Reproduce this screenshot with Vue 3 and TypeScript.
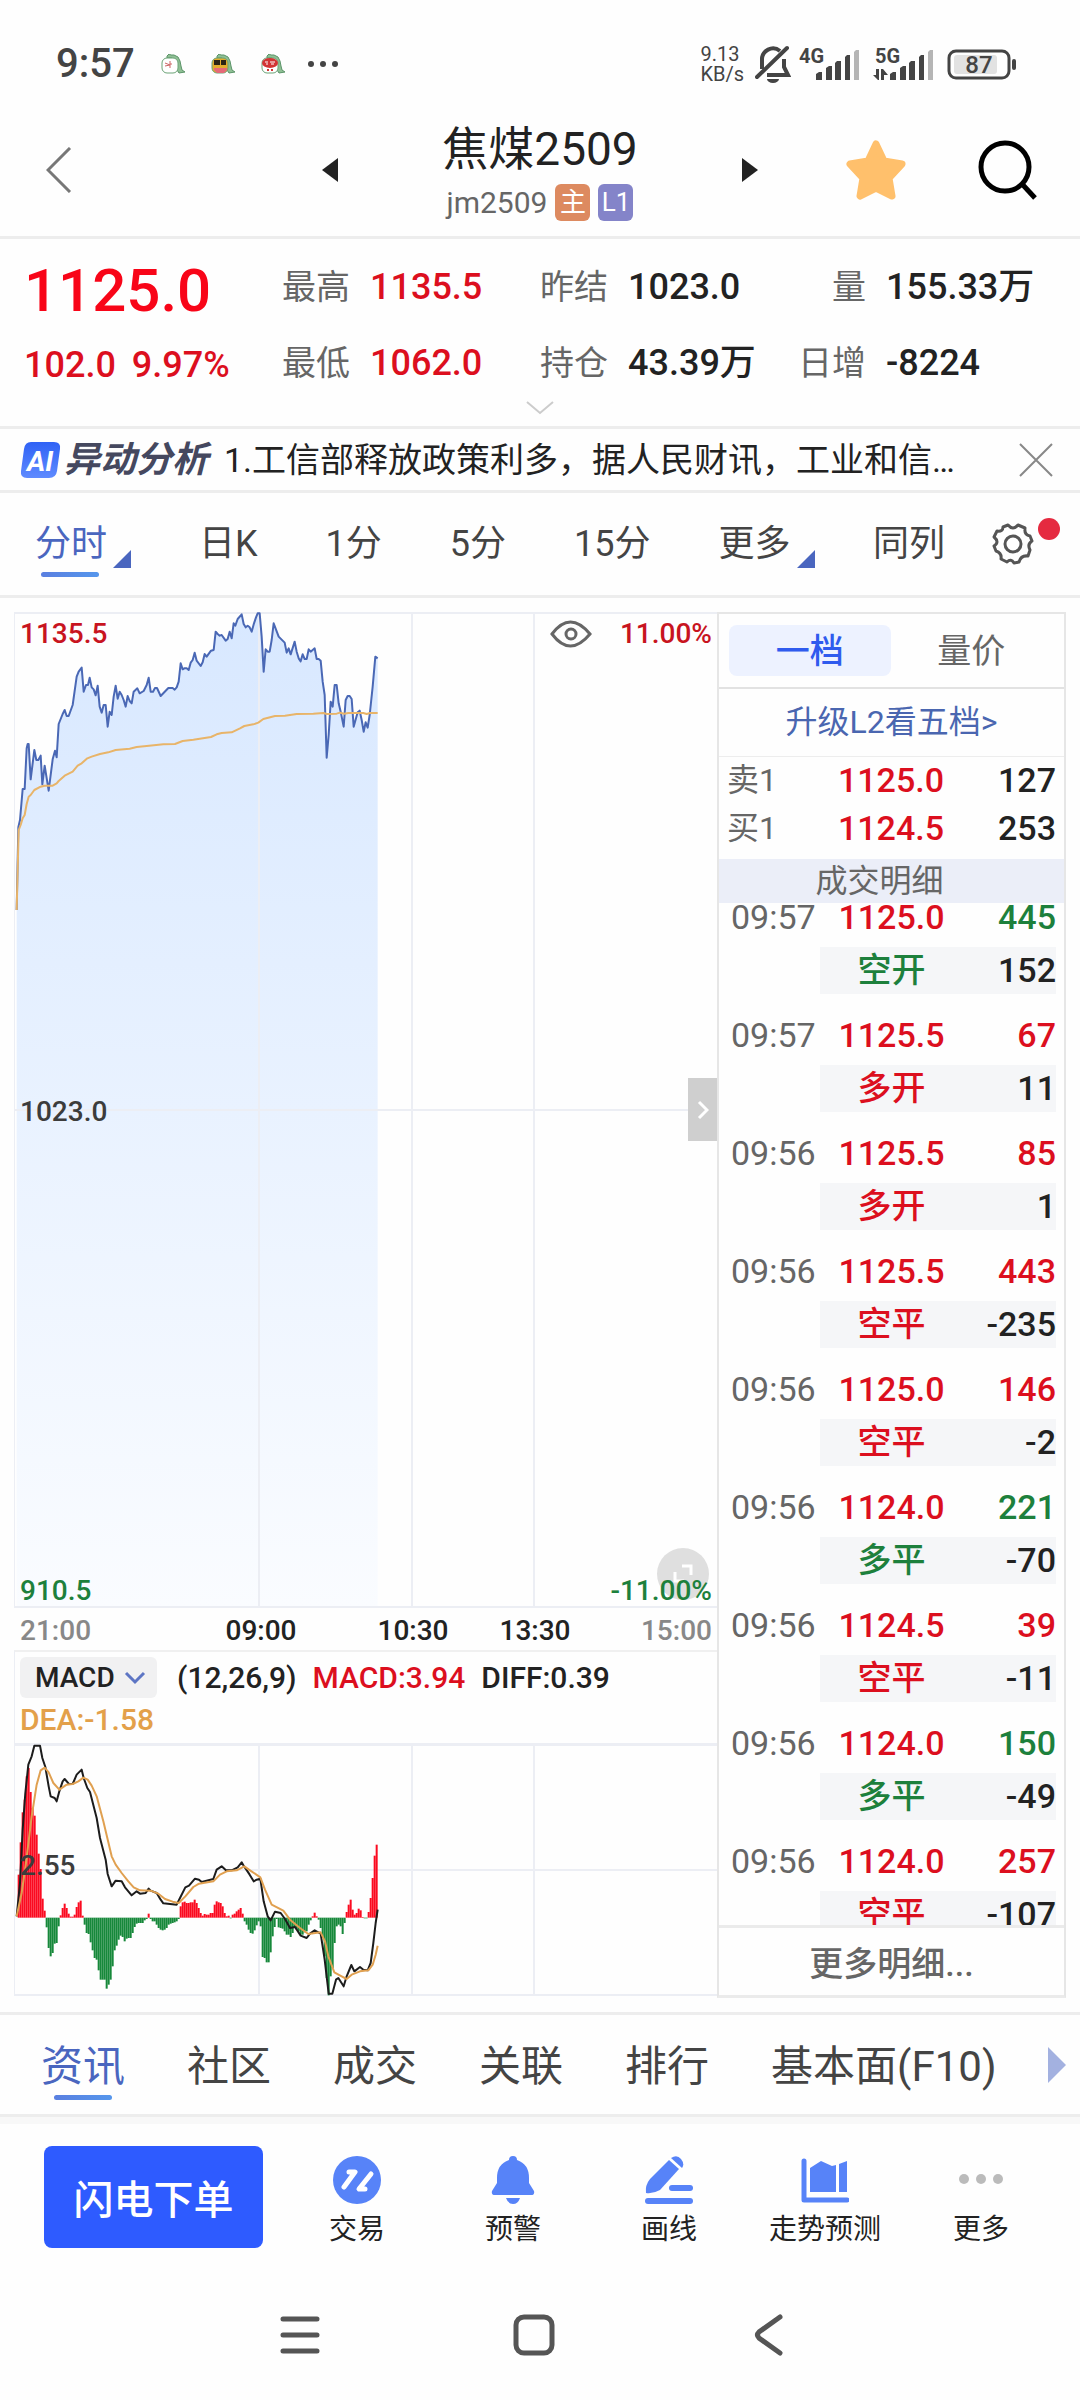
<script setup lang="ts">
import { computed, ref } from 'vue'

type Tone = 'up' | 'down'
interface Quote { label: string; value: string; tone?: Tone }
interface Trade { time: string; price: string; volume: string; tone: Tone; kind: string; kindTone: Tone; change: string }

const quoteRows: Quote[][] = [
  [
    { label: '最高', value: '1135.5', tone: 'up' },
    { label: '昨结', value: '1023.0' },
    { label: '量', value: '155.33万' },
  ],
  [
    { label: '最低', value: '1062.0', tone: 'up' },
    { label: '持仓', value: '43.39万' },
    { label: '日增', value: '-8224' },
  ],
]
const quotes = computed(() => quoteRows.flat())

const periods = [
  { name: '分时', menu: true },
  { name: '日K', menu: false },
  { name: '1分', menu: false },
  { name: '5分', menu: false },
  { name: '15分', menu: false },
  { name: '更多', menu: true },
]
const period = ref('分时')

const orders = [
  { side: '卖1', price: '1125.0', volume: '127' },
  { side: '买1', price: '1124.5', volume: '253' },
]

const trades: Trade[] = [
  { time: '09:57', price: '1125.0', volume: '445', tone: 'down', kind: '空开', kindTone: 'down', change: '152' },
  { time: '09:57', price: '1125.5', volume: '67', tone: 'up', kind: '多开', kindTone: 'up', change: '11' },
  { time: '09:56', price: '1125.5', volume: '85', tone: 'up', kind: '多开', kindTone: 'up', change: '1' },
  { time: '09:56', price: '1125.5', volume: '443', tone: 'up', kind: '空平', kindTone: 'up', change: '-235' },
  { time: '09:56', price: '1125.0', volume: '146', tone: 'up', kind: '空平', kindTone: 'up', change: '-2' },
  { time: '09:56', price: '1124.0', volume: '221', tone: 'down', kind: '多平', kindTone: 'down', change: '-70' },
  { time: '09:56', price: '1124.5', volume: '39', tone: 'up', kind: '空平', kindTone: 'up', change: '-11' },
  { time: '09:56', price: '1124.0', volume: '150', tone: 'down', kind: '多平', kindTone: 'down', change: '-49' },
  { time: '09:56', price: '1124.0', volume: '257', tone: 'up', kind: '空平', kindTone: 'up', change: '-107' },
]

const sections = ['资讯', '社区', '成交', '关联', '排行', '基本面(F10)']
const section = ref('资讯')
const indicator = ref('MACD')

// Series in chart units, three to a pixel of the panel's natural width.
const priceLine =
  '50,930 55,682 60,660 68,567 74,567 80,445 83,432 86,432 92,538 103,450 109,480 115,480 122,467 127,553 134,497 146,572 158,478 165,452 170,472 176,372 188,342 194,330 200,348 206,348 218,315 230,230 236,215 245,203 251,275 258,255 264,255 269,233 275,262 281,268 287,286 293,257 299,320 305,338 311,315 317,315 323,380 329,335 335,345 341,290 347,257 353,296 359,275 365,285 371,300 377,320 383,288 389,303 395,310 401,275 412,265 419,280 431,273 440,255 446,233 452,275 459,275 465,264 471,264 482,288 505,264 518,264 524,269 530,262 536,245 542,190 548,208 553,205 560,205 566,210 572,188 578,180 584,158 590,182 602,198 608,187 614,162 620,170 633,152 641,150 647,95 653,102 659,107 665,105 677,122 683,117 689,95 695,115 701,70 706,77 713,57 725,43 731,72 737,82 743,77 749,82 755,95 762,70 768,52 773,40 779,40 785,110 791,215 797,148 803,155 809,155 815,120 821,70 836,110 854,128 860,158 866,145 872,163 884,125 890,155 896,175 902,184 908,163 914,177 920,177 926,148 932,155 944,145 950,177 956,177 962,182 968,245 974,285 980,473 986,405 992,305 998,320 1004,255 1010,255 1016,310 1022,335 1031,380 1037,300 1043,288 1049,288 1055,297 1061,380 1073,337 1079,332 1085,360 1091,395 1097,367 1103,383 1109,345 1118,260 1126,170 1133,175'
const averageLine =
  '50,930 56,690 62,675 68,655 74,645 80,612 86,590 92,585 103,570 122,560 134,557 158,557 170,550 176,543 194,527 218,515 233,497 245,490 262,475 275,470 300,462 325,457 347,450 389,446 410,441 440,438 490,433 525,432 548,423 580,419 633,411 650,403 665,399 695,397 720,385 733,378 760,373 775,368 790,357 825,348 855,347 890,342 940,341 970,339 980,342 1010,341 1020,338 1033,341 1045,339 1090,339 1100,342 1110,339 1133,339'
const priceArea = `50,3021 ${priceLine} 1133,3021`

const diffLine =
  '50,1160 60,1060 68,900 76,790 85,705 95,680 103,648 120,648 127,685 136,712 146,770 152,800 164,805 170,815 178,785 188,755 194,748 206,762 218,763 230,735 245,720 251,745 262,775 270,787 290,865 300,925 317,990 323,1033 335,1070 347,1053 365,1055 375,1073 395,1097 410,1085 420,1092 437,1090 446,1077 452,1083 470,1090 482,1110 490,1121 530,1125 540,1105 556,1073 567,1068 585,1047 597,1050 605,1057 640,1048 650,1020 665,1010 677,1021 695,1022 713,1013 725,998 731,1008 749,1035 761,1055 770,1050 781,1047 791,1115 803,1160 812,1172 825,1146 842,1150 855,1168 870,1195 885,1192 902,1218 920,1225 930,1212 944,1202 962,1212 974,1290 986,1392 997,1392 1008,1350 1015,1345 1031,1370 1040,1340 1054,1306 1063,1325 1080,1312 1090,1320 1103,1322 1112,1300 1120,1240 1127,1180 1133,1140'
const deaLine =
  '50,1160 65,1090 78,1000 95,860 110,765 122,722 134,714 146,728 160,760 178,780 200,765 218,763 235,755 250,744 263,750 275,768 290,800 310,875 335,980 347,1005 365,1030 385,1055 401,1073 420,1082 452,1083 475,1092 495,1108 518,1116 536,1120 556,1100 580,1072 597,1062 640,1055 660,1035 680,1025 710,1022 733,1010 750,1022 781,1043 795,1080 815,1125 850,1143 870,1170 900,1195 925,1213 962,1208 975,1235 985,1280 1003,1328 1025,1340 1040,1348 1055,1335 1080,1325 1105,1322 1118,1305 1127,1275 1133,1248'

const BASE = 1164
const barEnds = [
  1035, 938, 848, 810, 740, 715, 787, 835, 858, 915, 972, 1018, 1107, 1143, 1193, 1255, 1280, 1270, 1242, 1240,
  1190, 1157, 1135, 1122, 1135, 1152, 1161, 1161, 1155, 1132, 1118, 1113, 1158, 1185, 1210, 1213, 1238, 1262, 1285, 1290,
  1322, 1350, 1350, 1350, 1377, 1365, 1350, 1310, 1262, 1248, 1230, 1218, 1222, 1235, 1227, 1225, 1225, 1210, 1192, 1182,
  1180, 1180, 1180, 1172, 1168, 1152, 1168, 1175, 1175, 1185, 1195, 1200, 1202, 1200, 1195, 1185, 1182, 1180, 1178, 1175,
  1168, 1130, 1118, 1116, 1120, 1120, 1118, 1118, 1110, 1120, 1135, 1150, 1158, 1153, 1155, 1155, 1150, 1150, 1125, 1115,
  1118, 1120, 1130, 1150, 1160, 1158, 1166, 1155, 1152, 1145, 1140, 1135, 1152, 1175, 1185, 1200, 1210, 1212, 1202, 1187,
  1175, 1190, 1282, 1285, 1298, 1298, 1268, 1220, 1192, 1168, 1193, 1195, 1197, 1205, 1215, 1215, 1222, 1210, 1195, 1200,
  1205, 1215, 1215, 1208, 1205, 1185, 1172, 1160, 1149, 1160, 1170, 1195, 1225, 1280, 1345, 1397, 1340, 1315, 1240, 1190,
  1185, 1190, 1213, 1180, 1147, 1125, 1110, 1140, 1155, 1150, 1137, 1142, 1162, 1166, 1166, 1147, 1105, 1045, 978, 945,
]
const bars = barEnds.map((end, i) => ({
  x: 53 + i * 6,
  y: Math.min(end, BASE),
  height: Math.abs(end - BASE),
  tone: end < BASE ? 'bar-up' : 'bar-down',
}))
</script>

<template>
  <div class="page">
    <div class="status">
      <div class="status-left">
        <span class="clock">9:57</span>
        <svg v-for="n in 3" :key="n" class="dino" viewBox="0 0 24 20" aria-hidden="true">
          <path d="M6 2 8 0l2 1 3 0 4 2 2 4 1 5 1 4 3 2-6 1-2-3-1-8-4-4-5 0z" fill="#8fbf94" stroke="#5b9468" />
          <rect x="1" y="4" width="16" height="15" rx="5" :fill="n === 1 ? '#fff' : n === 2 ? '#e3ac2c' : '#fff'" stroke="#6aa376" />
          <path v-if="n === 1" d="M4 9l5 2-5 1M9 7v7M9 10h2" fill="none" stroke="#c66" />
          <template v-if="n === 2">
            <path d="M3 6h6v5H3zM10 6h5v5h-5z" fill="#2b2414" />
            <path d="M3 14h13v2l-3 3H6l-3-3z" fill="#e56a78" />
          </template>
          <template v-if="n === 3">
            <ellipse cx="9" cy="9" rx="8" ry="5" fill="#d23434" />
            <path d="M4 8h3M9 8h5M5 10h2M10 10h3" stroke="#fff" />
            <path d="M6 16h2M10 16h2" stroke="#d23434" stroke-width="2" />
          </template>
        </svg>
        <svg class="dots" viewBox="0 0 32 8" aria-hidden="true">
          <g fill="#444"><circle cx="4" cy="4" r="3" /><circle cx="16" cy="4" r="3" /><circle cx="28" cy="4" r="3" /></g>
        </svg>
      </div>
      <div class="status-right">
        <div class="speed"><span>9.13</span><span>KB/s</span></div>
        <svg class="mute" viewBox="0 0 36 38" aria-hidden="true">
          <path d="M7 24V15a11 11 0 0 1 18-9M29 14v8l4 8H12" fill="none" stroke="#444" stroke-width="4" />
          <path d="M2 32 32 3" stroke="#444" stroke-width="4" stroke-linecap="round" />
          <path d="M12 34h12a6 4 0 0 1-12 0z" fill="#444" />
        </svg>
        <svg class="signal" viewBox="0 -6 62 48" aria-hidden="true">
          <text x="0" y="17" class="net">4G</text>
          <g fill="#444">
            <path d="M17 28l3-2h3v8h-6zM27 22l3-2h3v14h-6zM36 17l2-2h4v19h-6zM46 11l2-2h3v25h-5z" />
            <path d="M55 6l2-2h3v30h-5z" fill="#b5b5b5" />
          </g>
        </svg>
        <svg class="signal" viewBox="0 -6 62 48" aria-hidden="true">
          <text x="2" y="17" class="net">5G</text>
          <g fill="#444">
            <path d="M0 29h3v-6h3v11H5zM8 34V23h2l5 6h-4v5z" />
            <path d="M17 28l3-2h3v8h-6zM27 22l3-2h3v14h-6zM36 17l2-2h4v19h-6zM46 11l2-2h3v25h-5z" />
            <path d="M55 6l2-2h3v30h-5z" fill="#b5b5b5" />
          </g>
        </svg>
        <svg class="battery" viewBox="0 0 70 32" aria-hidden="true">
          <rect x="2" y="3" width="60" height="27" rx="7" fill="none" stroke="#444" stroke-width="3" />
          <rect x="7" y="7" width="43" height="19" rx="3" fill="#e2e2e2" />
          <path d="M67 13v7" stroke="#444" stroke-width="4" stroke-linecap="round" />
          <text x="32" y="25" text-anchor="middle" class="charge">87</text>
        </svg>
      </div>
    </div>

    <header class="header">
      <button class="icon-button back" aria-label="返回">
        <svg width="26" height="46" viewBox="0 0 26 46"><path d="M24 1 2 23 24 45" fill="none" stroke="#777" stroke-width="3" /></svg>
      </button>
      <div class="contract">
        <button class="icon-button" aria-label="上一个合约">
          <svg width="16" height="24" viewBox="0 0 16 24"><path d="M16 0v24L0 12z" fill="#222" /></svg>
        </button>
        <div class="contract-name">
          <h1>焦煤2509</h1>
          <p><span>jm2509</span><b class="badge main">主</b><b class="badge level">L1</b></p>
        </div>
        <button class="icon-button" aria-label="下一个合约">
          <svg width="16" height="24" viewBox="0 0 16 24"><path d="M0 0v24l16-12z" fill="#222" /></svg>
        </button>
      </div>
      <div class="header-tools">
        <button class="icon-button" aria-label="自选">
          <svg width="60" height="60" viewBox="0 0 60 60">
            <path d="M30 4 38 21 56 24 43 38 46 56 30 48 14 56 17 38 4 24 22 21z" fill="#ffc06c" stroke="#ffc06c" stroke-width="7" stroke-linejoin="round" />
          </svg>
        </button>
        <button class="icon-button" aria-label="搜索">
          <svg width="60" height="60" viewBox="0 0 60 60"><circle cx="27" cy="27" r="24" fill="none" stroke="#000" stroke-width="5" /><path d="M45 45 57 58" stroke="#000" stroke-width="5" /></svg>
        </button>
      </div>
    </header>

    <section class="quote">
      <div class="quote-body">
        <div class="last">
          <strong>1125.0</strong>
          <span>102.0</span><span>9.97%</span>
        </div>
        <dl class="stats">
          <div v-for="q in quotes" :key="q.label">
            <dt>{{ q.label }}</dt>
            <dd :class="q.tone">{{ q.value }}</dd>
          </div>
        </dl>
      </div>
      <button class="icon-button more-quote" aria-label="展开">
        <svg width="28" height="14" viewBox="0 0 28 14"><path d="M1 1l13 11L27 1" fill="none" stroke="#ccc" stroke-width="2" /></svg>
      </button>
    </section>

    <section class="news">
      <svg class="ai" viewBox="0 0 42 38" aria-hidden="true">
        <defs><linearGradient id="ai-fill" x1="0" y1="0" x2="0" y2="1"><stop offset="0" stop-color="#2f62f5" /><stop offset="1" stop-color="#5f8bff" /></linearGradient></defs>
        <path d="M11 1h23q7 0 6 7l-3 22q-1 7-8 7H7q-7 0-6-7L4 8q1-7 7-7z" fill="url(#ai-fill)" />
        <text x="20" y="30" text-anchor="middle" class="ai-text">AI</text>
      </svg>
      <h2>异动分析</h2>
      <a href="#news">1.工信部释放政策利多，据人民财讯，工业和信…</a>
      <button class="icon-button" aria-label="关闭">
        <svg width="34" height="34" viewBox="0 0 34 34"><path d="M1 1l32 32M33 1 1 33" stroke="#888" stroke-width="2" /></svg>
      </button>
    </section>

    <nav class="periods">
      <div class="period-list">
        <button v-for="p in periods" :key="p.name" :class="{ active: p.name === period }" @click="period = p.name">
          <span>{{ p.name }}</span>
          <svg v-if="p.menu" width="18" height="18" viewBox="0 0 18 18"><path d="M18 0v18H0z" fill="#4a66bf" /></svg>
        </button>
      </div>
      <div class="period-tools">
        <button>同列</button>
        <button class="settings" aria-label="设置">
          <svg width="42" height="42" viewBox="0 0 42 42" fill="none" stroke="#555" stroke-width="3">
            <path d="M16 2q5 6 10 0l7 3q-1 7 5 8l2 5q-5 3-2 9l-2 6q-7-1-9 6l-5 1q-3-5-7-1l-6-3q1-6-5-8l-2-5q6-4 0-9l3-6q6 1 6-4z" stroke-linejoin="round" />
            <circle cx="21" cy="21" r="8" />
          </svg>
          <i class="dot"></i>
        </button>
      </div>
    </nav>

    <main class="board">
      <div class="charts">
        <div class="price-chart">
          <svg viewBox="0 0 703 1038" role="img" aria-label="分时走势">
            <defs>
              <linearGradient id="area-fill" x1="0" y1="0" x2="0" y2="1">
                <stop offset="0" stop-color="#d8e8ff" /><stop offset="1" stop-color="#fafcff" />
              </linearGradient>
            </defs>
            <svg width="703" height="995" viewBox="42 36 2109 2985">
              <polygon :points="priceArea" fill="url(#area-fill)" />
            </svg>
            <g class="grid">
              <path d="M0 0v995M245 0v995M398 0v995M520 0v995M0 498h703M0 995h703" />
              <path d="M0 1h703" />
            </g>
            <svg width="703" height="995" viewBox="42 36 2109 2985" fill="none" stroke-linejoin="round">
              <polyline :points="priceLine" stroke="#4a68b5" stroke-width="6" />
              <polyline :points="averageLine" stroke="#e8b469" stroke-width="6" />
            </svg>
            <g class="labels">
              <text x="6" y="31" class="up">1135.5</text>
              <text x="698" y="31" class="up end">11.00%</text>
              <text x="6" y="509" class="scale">1023.0</text>
              <text x="6" y="988" class="down">910.5</text>
              <text x="6" y="1028" class="muted">21:00</text>
              <text x="247" y="1028" class="mid">09:00</text>
              <text x="399" y="1028" class="mid">10:30</text>
              <text x="521" y="1028" class="mid">13:30</text>
              <text x="698" y="1028" class="muted end">15:00</text>
            </g>
            <circle cx="669" cy="962" r="26" fill="#d9d9d9" fill-opacity="0.85" />
            <path d="M668 954h9v9M661 960v9h9" fill="none" stroke="#fff" stroke-width="3" />
            <g class="labels"><text x="698" y="988" class="down end">-11.00%</text></g>
          </svg>
          <button class="icon-button eye" aria-label="显示">
            <svg width="42" height="28" viewBox="0 0 42 28" fill="none" stroke="#666" stroke-width="3"><path d="M2 14Q20-10 40 14 20 38 2 14z" /><circle cx="21" cy="14" r="5" /></svg>
          </button>
          <button class="icon-button handle" aria-label="收起盘口">
            <svg width="12" height="20" viewBox="0 0 12 20"><path d="M2 2l8 8-8 8" fill="none" stroke="#fff" stroke-width="3" /></svg>
          </button>
        </div>
        <div class="indicator">
          <label class="picker">
            <select v-model="indicator" aria-label="指标"><option>MACD</option></select>
            <svg width="22" height="14" viewBox="0 0 22 14"><path d="M2 2l9 9 9-9" fill="none" stroke="#5d75c4" stroke-width="3" /></svg>
          </label>
          <span>(12,26,9)</span>
          <span class="up">MACD:3.94</span>
          <span>DIFF:0.39</span>
          <span class="dea">DEA:-1.58</span>
        </div>
        <svg class="macd" viewBox="0 0 703 252" role="img" aria-label="MACD">
          <path class="grid" d="M0 0v252M245 0v252M398 0v252M520 0v252M0 126h703M0 1h703M0 251h703" />
          <svg width="703" height="252" viewBox="42 643 2109 756">
            <rect v-for="bar in bars" :key="bar.x" :x="bar.x" :y="bar.y" width="6" :height="bar.height" :class="bar.tone" />
            <g fill="none" stroke-linejoin="round" stroke-width="6">
              <polyline :points="diffLine" stroke="#1c1c1c" />
              <polyline :points="deaLine" stroke="#e0a050" />
            </g>
          </svg>
          <g class="labels"><text x="6" y="131" class="scale">2.55</text></g>
        </svg>
      </div>

      <aside class="book">
        <div class="book-tabs">
          <button class="active">一档</button>
          <button>量价</button>
        </div>
        <a class="upgrade" href="#l2">升级L2看五档&gt;</a>
        <table class="orders">
          <tbody>
            <tr v-for="o in orders" :key="o.side">
              <th scope="row">{{ o.side }}</th>
              <td class="up">{{ o.price }}</td>
              <td>{{ o.volume }}</td>
            </tr>
          </tbody>
        </table>
        <h3>成交明细</h3>
        <div class="trade-list">
          <table>
            <tbody v-for="(t, i) in trades" :key="i">
              <tr>
                <th scope="row">{{ t.time }}</th>
                <td class="up">{{ t.price }}</td>
                <td :class="t.tone">{{ t.volume }}</td>
              </tr>
              <tr class="detail">
                <td></td>
                <td :class="t.kindTone">{{ t.kind }}</td>
                <td>{{ t.change }}</td>
              </tr>
            </tbody>
          </table>
        </div>
        <button class="more-trades">更多明细...</button>
      </aside>
    </main>

    <nav class="sections">
      <div class="section-list">
        <button v-for="s in sections" :key="s" :class="{ active: s === section }" @click="section = s">{{ s }}</button>
      </div>
      <svg width="18" height="36" viewBox="0 0 18 36" aria-hidden="true"><path d="M0 0v36l18-18z" fill="#a3b1e0" /></svg>
    </nav>

    <footer class="actions">
      <button class="order">闪电下单</button>
      <button class="action">
        <svg viewBox="0 0 48 48"><circle cx="24" cy="24" r="24" fill="#5783f8" /><path d="M11 31 22 16h-6M38 18 26 33h6" fill="none" stroke="#fff" stroke-width="5" stroke-linecap="round" stroke-linejoin="round" /></svg>
        交易
      </button>
      <button class="action">
        <svg viewBox="0 0 48 48" fill="#5783f8"><path d="M24 0q4 0 4 4 12 4 12 18v5l5 8q1 4-3 4H6q-4 0-3-4l5-8v-5Q8 8 20 4q0-4 4-4z" /><path d="M17 42h14q-2 6-7 6t-7-6z" /></svg>
        预警
      </button>
      <button class="action">
        <svg viewBox="0 0 48 48" fill="#5783f8">
          <path d="M24 4 34 13 15 34Q8 38 1 37 0 29 5 23z" /><path d="M26 2q6-4 10 1t1 9z" />
          <rect x="24" y="29" width="24" height="6" rx="3" /><rect x="0" y="42" width="48" height="6" rx="3" />
        </svg>
        画线
      </button>
      <button class="action">
        <svg viewBox="0 0 48 48" fill="#5783f8">
          <path d="M3 5v39h43" fill="none" stroke="#5783f8" stroke-width="5" stroke-linecap="round" stroke-linejoin="round" />
          <path d="M9 12 20 5l11 5 4-1v27H9zM38 8l8-3v31h-8z" />
        </svg>
        走势预测
      </button>
      <button class="action">
        <svg viewBox="0 0 48 48" fill="#bbb"><circle cx="7" cy="23" r="5" /><circle cx="24" cy="23" r="5" /><circle cx="41" cy="23" r="5" /></svg>
        更多
      </button>
    </footer>

    <nav class="system">
      <button class="icon-button" aria-label="最近任务">
        <svg width="44" height="44" viewBox="0 0 44 44"><path d="M5 6h34M5 22h34M5 38h34" stroke="#555" stroke-width="5" stroke-linecap="round" /></svg>
      </button>
      <button class="icon-button" aria-label="主页">
        <svg width="44" height="44" viewBox="0 0 44 44"><rect x="4" y="4" width="36" height="36" rx="8" fill="none" stroke="#555" stroke-width="5" /></svg>
      </button>
      <button class="icon-button" aria-label="后退">
        <svg width="44" height="44" viewBox="0 0 44 44"><path d="M33 4 12 19q-3 3 0 6L33 40" fill="none" stroke="#555" stroke-width="5" stroke-linecap="round" /></svg>
      </button>
    </nav>
  </div>
</template>

<style>
body {
  margin: 0;
  background: #fefefe;
}
</style>

<style scoped>
.page {
  font-family: Roboto, 'Noto Sans CJK SC', sans-serif;
  color: #222;
  background: #fefefe;
}
h1, h2, h3, p, dl, dd { margin: 0; font-weight: 400; }
button {
  margin: 0;
  padding: 0;
  border: 0;
  background: none;
  font: inherit;
  color: inherit;
  cursor: pointer;
}
a { color: inherit; text-decoration: none; }
svg { display: block; flex: none; }
.icon-button { display: flex; align-items: center; justify-content: center; }
.up { color: #dc0f1e; fill: #dc0f1e; }
.down { color: #1d803c; fill: #1d803c; }

.status {
  display: flex;
  justify-content: space-between;
  align-items: center;
  height: 112px;
  padding: 8px 63px 0 56px;
  color: #444;
}
.status-left, .status-right { display: flex; align-items: center; }
.clock { font-size: 40px; font-weight: 500; line-height: 48px; margin-right: 26px; }
.dino { width: 24px; height: 20px; margin-right: 26px; }
.dots { width: 32px; height: 8px; margin-left: -4px; }
.speed { display: flex; flex-direction: column; margin-right: 11px; font-size: 20px; line-height: 20px; }
.mute { width: 36px; height: 38px; margin-right: 8px; }
.signal { width: 62px; height: 48px; margin-right: 12px; }
.net { font: 700 20px Roboto, sans-serif; fill: #444; }
.battery { width: 70px; height: 32px; }
.charge { font: 500 24px Roboto, sans-serif; fill: #444; }

.header {
  display: grid;
  grid-template-columns: 1fr 436px 1fr;
  align-items: center;
  padding-bottom: 16px;
  border-bottom: 3px solid #ededed;
}
.back { margin-left: 46px; width: 26px; height: 84px; }
.contract { display: flex; justify-content: space-between; align-items: center; }
.contract-name { text-align: center; }
h1 { font-size: 46px; line-height: 58px; }
.contract-name p {
  display: flex;
  justify-content: center;
  align-items: center;
  height: 36px;
  margin-top: 6px;
  font-size: 30px;
  color: #666;
}
.badge {
  margin-left: 8px;
  width: 35px;
  border-radius: 6px;
  font-size: 26px;
  font-weight: 400;
  line-height: 37px;
  color: #fff;
}
.main { background: #dd8a60; }
.level { background: #8484c9; }
.header-tools { display: flex; justify-content: flex-end; gap: 72px; padding-right: 42px; }

.quote { border-bottom: 3px solid #ededed; padding: 10px 24px 12px; }
.quote-body { display: grid; grid-template-columns: 1fr 3fr; }
.last { display: flex; flex-wrap: wrap; align-content: flex-start; color: #dc0f1e; column-gap: 16px; white-space: nowrap; }
.last strong { flex: 0 0 100%; font-size: 60px; font-weight: 500; line-height: 84px; color: #f80518; }
.last span { font-size: 36px; font-weight: 500; line-height: 64px; }
.stats { display: grid; grid-template-columns: repeat(3, 1fr); }
.stats div { display: flex; align-items: center; gap: 20px; height: 76px; line-height: 48px; white-space: nowrap; }
dt { width: 68px; font-size: 34px; text-align: right; color: #666; }
dd { font-size: 36px; font-weight: 500; }
.more-quote { width: 100%; height: 13px; }

.news {
  display: flex;
  align-items: center;
  height: 61px;
  padding: 0 27px 0 20px;
  border-bottom: 3px solid #ededed;
}
.ai { width: 42px; height: 38px; }
.ai-text { font: italic 700 28px Roboto, sans-serif; fill: #fff; }
h2 {
  margin: 0 16px 0 2px;
  font-size: 36px;
  font-style: italic;
  font-weight: 700;
  line-height: 44px;
  color: #45485f;
  white-space: nowrap;
}
.news a { flex: 1; min-width: 0; overflow: hidden; white-space: nowrap; font-size: 34px; line-height: 48px; }

.periods {
  display: flex;
  justify-content: space-between;
  align-items: center;
  height: 102px;
  padding: 0 46px 0 35px;
  border-bottom: 3px solid #ededed;
  font-size: 36px;
  line-height: 56px;
  color: #444;
}
.period-list { display: flex; gap: 68px; }
.period-list button { display: flex; align-items: flex-end; gap: 6px; }
.period-list button svg { margin-bottom: 4px; }
.period-list .active { position: relative; color: #4a66bf; }
.period-list .active::after {
  content: '';
  position: absolute;
  left: 6px;
  bottom: -5px;
  width: 58px;
  height: 5px;
  border-radius: 3px;
  background: linear-gradient(90deg, #5a7fe0, #5596ec);
}
.period-tools { display: flex; align-items: center; gap: 47px; }
.settings { position: relative; }
.dot {
  position: absolute;
  top: -5px;
  right: -26px;
  width: 22px;
  height: 22px;
  border-radius: 50%;
  background: #e52a40;
}

.board {
  display: grid;
  grid-template-columns: 703fr 349fr;
  padding: 14px;
  border-bottom: 3px solid #ededed;
}
.charts { padding-bottom: 2px; }
.charts > svg, .price-chart > svg { width: 100%; height: auto; }
.price-chart { position: relative; }
.grid { fill: none; stroke: #eceef4; stroke-width: 2; }
.labels text { font: 500 28px Roboto, sans-serif; fill: #222; }
.labels .up { fill: #c8141f; }
.labels .down { fill: #1d803c; }
.labels .muted { fill: #888; }
.labels .mid { text-anchor: middle; }
.labels .end { text-anchor: end; }
.labels .scale { fill: #3c3c3c; }
.bar-up { fill: #fb0a20; }
.bar-down { fill: #16883a; }
.eye { position: absolute; top: 8px; right: 125px; }
.handle {
  position: absolute;
  top: 466px;
  right: 0;
  width: 29px;
  height: 63px;
  background: #cfcfcf;
}
.indicator {
  display: flex;
  flex-wrap: wrap;
  align-content: center;
  column-gap: 16px;
  height: 89px;
  padding: 2px 0 0 5px;
  border-top: 2px solid #f0f0f0;
  border-left: 1px solid #eceef4;
  border-bottom: 1px solid #eceef4;
  font-size: 30px;
  font-weight: 500;
  line-height: 42px;
}
.picker { position: relative; display: flex; align-items: center; margin-right: 4px; }
.picker select {
  appearance: none;
  width: 137px;
  height: 41px;
  padding: 0 0 0 15px;
  border: 0;
  border-radius: 6px;
  background: #f1f1f2;
  color: #222;
  font: 500 28px Roboto, sans-serif;
}
.picker svg { position: absolute; right: 11px; pointer-events: none; }
.dea { flex: 0 0 100%; color: #e3a04a; }

.book { display: flex; flex-direction: column; border: 2px solid #e6e6e6; border-bottom: 3px solid #ebebeb; }
.book-tabs {
  display: flex;
  padding: 11px 12px 11px 10px;
  border-bottom: 2px solid #e2e2e2;
  font-size: 34px;
  line-height: 50px;
  color: #666;
}
.book-tabs button { flex: 1; height: 51px; border-radius: 8px; }
.book-tabs .active { background: #edf2ff; color: #2f5bee; font-weight: 500; }
.upgrade {
  height: 67px;
  border-bottom: 1px solid #ededed;
  text-align: center;
  font-size: 32px;
  line-height: 66px;
  color: #4a66b0;
}
table { display: block; font-size: 34px; }
tbody { display: block; }
tr { display: grid; grid-template-columns: 89fr 144fr 93fr; }
th, td { padding: 0; font-weight: 500; text-align: right; white-space: nowrap; }
th { font-weight: 400; text-align: left; color: #666; }
td:nth-child(2) { text-align: center; }
.orders { padding: 0 8px 6px; }
.orders tr { grid-template-columns: 92fr 144fr 93fr; line-height: 46px; margin-bottom: 2px; }
.orders th { font-size: 32px; }
h3 {
  padding-right: 24px;
  background: #ebeef8;
  font-size: 32px;
  line-height: 44px;
  text-align: center;
  color: #666;
}
.trade-list {
  flex: 1 0 auto;
  height: 0;
  margin-top: -6px;
  padding: 5px 8px 0 12px;
  overflow: hidden;
}
.trade-list tbody { height: 118px; }
.trade-list tr { line-height: 31px; }
.trade-list .detail { margin-top: 14px; line-height: 47px; }
.detail td + td { background: #f5f6f8; }
.more-trades {
  height: 70px;
  border-top: 3px solid #ebebeb;
  font-size: 34px;
  font-weight: 500;
  color: #666;
}

.sections {
  display: flex;
  justify-content: space-between;
  align-items: center;
  height: 99px;
  padding: 0 14px 0 41px;
  border-bottom: 3px solid #ededed;
  font-size: 42px;
  color: #444;
  white-space: nowrap;
}
.section-list { display: flex; gap: 62px; }
.section-list button { position: relative; padding-top: 5px; line-height: 62px; }
.sections .active { color: #4a66bf; }
.sections .active::after {
  content: '';
  position: absolute;
  left: 13px;
  bottom: -2px;
  width: 58px;
  height: 5px;
  border-radius: 3px;
  background: linear-gradient(90deg, #5a7fe0, #5596ec);
}

.actions {
  display: flex;
  align-items: center;
  height: 146px;
  padding: 0 21px 0 44px;
  border-top: 7px solid #f8f8f8;
}
.order {
  width: 219px;
  height: 102px;
  margin-right: 16px;
  border-radius: 8px;
  background: #2e5bff;
  color: #fff;
  font-size: 40px;
  font-weight: 500;
}
.action {
  flex: 1;
  display: flex;
  flex-direction: column;
  align-items: center;
  padding-top: 10px;
  font-size: 28px;
  line-height: 36px;
  white-space: nowrap;
}
.action svg { width: 48px; height: 48px; margin-bottom: 8px; }

.system {
  display: grid;
  grid-template-columns: repeat(3, 1fr);
  height: 130px;
  padding: 0 194px 0 183px;
}
</style>
